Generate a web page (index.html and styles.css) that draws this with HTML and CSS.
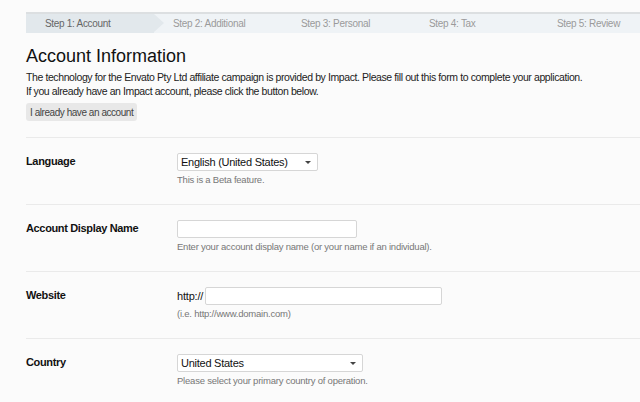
FILE: index.html
```html
<!DOCTYPE html>
<html lang="en">
  <head>
    <meta charset="UTF-8" />
    <title>Account Information</title>
    <link rel="stylesheet" href="styles.css">
  </head>
  <body>
    <div class="page">
      <!-- wizard steps -->
      <ol class="steps">
        <li class="step active">Step 1: Account</li>
        <li class="step">Step 2: Additional</li>
        <li class="step">Step 3: Personal</li>
        <li class="step">Step 4: Tax</li>
        <li class="step">Step 5: Review</li>
      </ol>

      <h1 class="title">Account Information</h1>
      <p class="intro">
        The technology for the Envato Pty Ltd affiliate campaign is provided by Impact. Please fill out this form to complete your application.<br />
        If you already have an Impact account, please click the button below.
      </p>
      <button class="btn">I already have an account</button>

      <div class="row">
        <label class="label">Language</label>
        <div class="field">
          <div class="select w-lang">English (United States)<span class="caret"></span></div>
          <div class="help">This is a Beta feature.</div>
        </div>
      </div>

      <div class="row">
        <label class="label">Account Display Name</label>
        <div class="field">
          <input class="input w-name" type="text" />
          <div class="help">Enter your account display name (or your name if an individual).</div>
        </div>
      </div>

      <div class="row">
        <label class="label">Website</label>
        <div class="field">
          <div class="prefixed">
            <span class="prefix">http://</span>
            <input class="input w-site" type="text" />
          </div>
          <div class="help">(i.e. http://www.domain.com)</div>
        </div>
      </div>

      <div class="row">
        <label class="label">Country</label>
        <div class="field">
          <div class="select w-country">United States<span class="caret"></span></div>
          <div class="help">Please select your primary country of operation.</div>
        </div>
      </div>
    </div>
  </body>
</html>
```

FILE: styles.css
```css
body {
  margin: 0;
  background-color: #fbfbfb;
  font-family: "Liberation Sans", Arial, sans-serif;
  color: #222;
  overflow: hidden;
}

* {
  box-sizing: border-box;
}

.page {
  padding: 12px 0 0 26px;
}

.steps {
  display: flex;
  margin: 0;
  padding: 0;
  list-style: none;
  height: 21px;
  overflow: hidden;
  border-top: 2px solid #dcdfe1;
  background-color: #eff3f6;
}

.step {
  position: relative;
  flex: 0 0 128px;
  padding-left: 19px;
  font-size: 10px;
  letter-spacing: -0.3px;
  line-height: 19px;
  color: #9a9a9a;
}

.step.active {
  background-color: #e2e8ec;
  color: #666;
}

/* arrow tip on the current step */
.step.active::after {
  content: "";
  position: absolute;
  top: 0;
  right: -10px;
  border-top: 9.5px solid transparent;
  border-bottom: 9.5px solid transparent;
  border-left: 10px solid #e2e8ec;
}

.title {
  margin: 11px 0 0;
  font-size: 18px;
  font-weight: normal;
  color: #111;
  line-height: 24px;
}

.intro {
  margin: 2px 0 0;
  font-size: 10.5px;
  letter-spacing: -0.4px;
  line-height: 14px;
  color: #222;
}

.btn {
  margin-top: 5px;
  padding: 0 4px;
  height: 18px;
  border: 0;
  border-radius: 3px;
  background-color: #e8e8e8;
  font-family: inherit;
  font-size: 10px;
  letter-spacing: -0.45px;
  color: #444;
}

.row {
  display: flex;
  height: 67px;
  border-top: 1px solid #eaeaea;
  padding-top: 15px;
}

.row:first-of-type {
  margin-top: 16px;
}

.label {
  width: 151px;
  padding-top: 2px;
  font-size: 11px;
  letter-spacing: -0.35px;
  font-weight: bold;
  color: #111;
}

.select,
.input {
  display: block;
  height: 18px;
  border: 1px solid #d6d6d6;
  border-radius: 2px;
  background-color: #fff;
}

.select {
  position: relative;
  padding-left: 3px;
  font-size: 11px;
  letter-spacing: -0.25px;
  line-height: 16px;
  color: #111;
}

.caret {
  position: absolute;
  right: 6px;
  top: 7px;
  border-left: 3px solid transparent;
  border-right: 3px solid transparent;
  border-top: 3px solid #444;
}

.input {
  margin: 0;
  padding: 0;
}

.w-lang {
  width: 141px;
}

.w-name {
  width: 180px;
}

.w-site {
  width: 237px;
}

.w-country {
  width: 186px;
}

.prefixed {
  display: flex;
  align-items: center;
}

.prefix {
  font-size: 11px;
  letter-spacing: -0.2px;
  margin-right: 2px;
  color: #111;
}

.help {
  margin-top: 3px;
  font-size: 9.5px;
  letter-spacing: -0.22px;
  color: #777;
}
```
